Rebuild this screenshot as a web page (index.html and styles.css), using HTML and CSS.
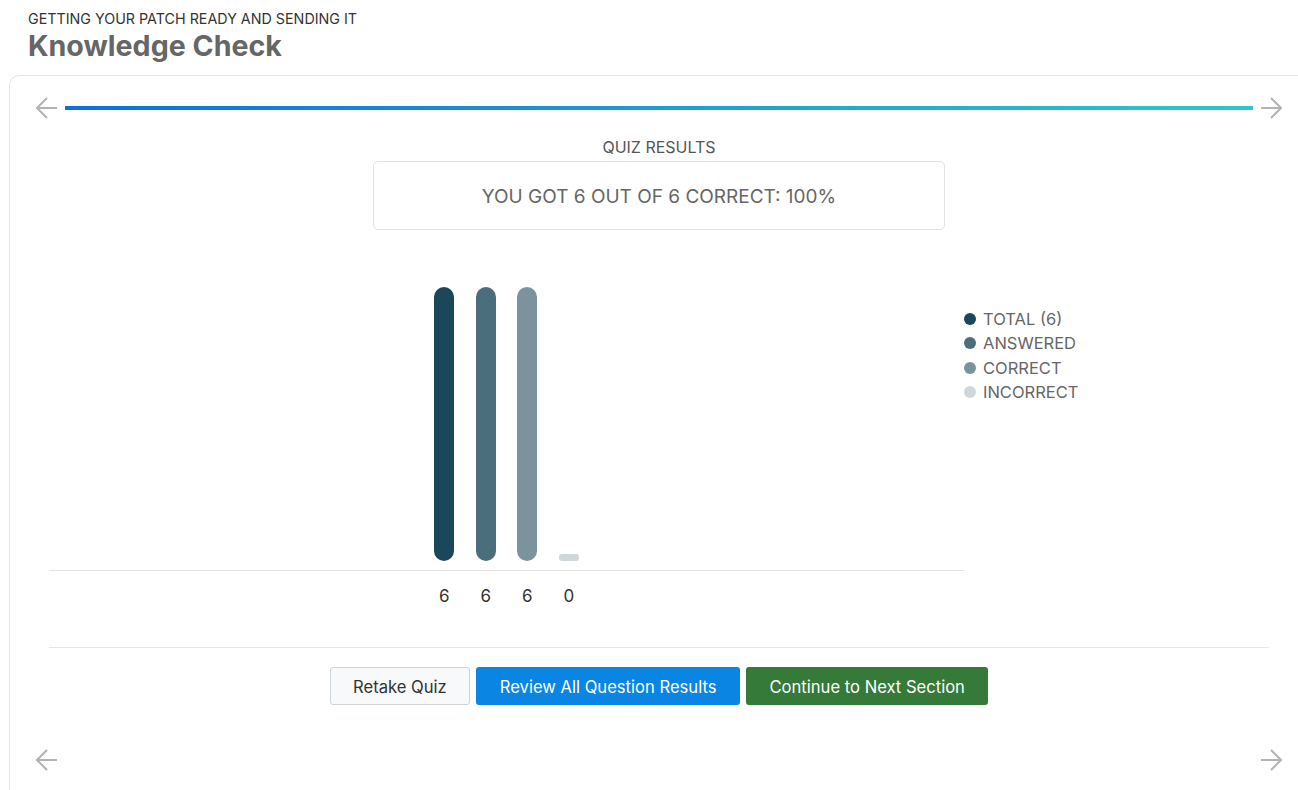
FILE: index.html
```html
<!DOCTYPE html>
<html>
<head>
<meta charset="utf-8">
<link rel="stylesheet" href="styles.css">
</head>
<body>
<header class="page-header">
  <div class="subtitle">GETTING YOUR PATCH READY AND SENDING IT</div>
  <h1 class="title">Knowledge Check</h1>
</header>
<main class="card">
  <div class="nav-row">
    <svg class="arrow" width="22" height="22" viewBox="0 0 22 22"><path d="M21 11H1M11 1L1 11L11 21" fill="none" stroke="#b3b3b3" stroke-width="2"/></svg>
    <div class="progress"></div>
    <svg class="arrow" width="22" height="22" viewBox="0 0 22 22"><path d="M1 11H21M11 1L21 11L11 21" fill="none" stroke="#b3b3b3" stroke-width="2"/></svg>
  </div>
  <section class="content">
    <div class="results-label">QUIZ RESULTS</div>
    <div class="score-box">YOU GOT 6 OUT OF 6 CORRECT: 100%</div>
    <div class="chart">
      <div class="plot-col">
        <div class="plot">
          <div class="bar c1" style="height:274px"></div>
          <div class="bar c2" style="height:274px"></div>
          <div class="bar c3" style="height:274px"></div>
          <div class="bar c4" style="height:7px"></div>
        </div>
        <div class="values">
          <span>6</span><span>6</span><span>6</span><span>0</span>
        </div>
      </div>
      <ul class="legend">
        <li><span class="dot c1"></span>TOTAL (6)</li>
        <li><span class="dot c2"></span>ANSWERED</li>
        <li><span class="dot c3"></span>CORRECT</li>
        <li><span class="dot c4"></span>INCORRECT</li>
      </ul>
    </div>
    <div class="actions">
      <button class="btn btn-light">Retake Quiz</button>
      <button class="btn btn-blue">Review All Question Results</button>
      <button class="btn btn-green">Continue to Next Section</button>
    </div>
  </section>
  <div class="nav-row bottom">
    <svg class="arrow" width="22" height="22" viewBox="0 0 22 22"><path d="M21 11H1M11 1L1 11L11 21" fill="none" stroke="#b3b3b3" stroke-width="2"/></svg>
    <div class="spacer"></div>
    <svg class="arrow" width="22" height="22" viewBox="0 0 22 22"><path d="M1 11H21M11 1L21 11L11 21" fill="none" stroke="#b3b3b3" stroke-width="2"/></svg>
  </div>
</main>
</body>
</html>
```

FILE: styles.css
```css
* { box-sizing: border-box; }
html, body { margin: 0; padding: 0; }
body {
  font-family: Inter, "Noto Sans", sans-serif;
  background: #fff;
  color: #333;
  width: 1298px;
  height: 790px;
  overflow: hidden;
}
.page-header {
  padding: 10px 28px 0;
}
.subtitle {
  font-size: 14.3px;
  line-height: 18px;
  color: #333;
}
.title {
  margin: 2px 0 0;
  font-size: 28.6px;
  line-height: 32px;
  font-weight: 700;
  color: #666;
}
.card {
  margin: 13px 0 0 9px;
  width: 1300px;
  height: 740px;
  border: 1px solid #e6e6e6;
  border-bottom: none;
  border-radius: 10px 10px 0 0;
  padding: 21px 26px 0;
}
.nav-row {
  display: flex;
  align-items: center;
  gap: 7px;
  height: 22px;
}
.arrow { flex: none; display: block; }
.progress {
  flex: 1;
  height: 4px;
  background: linear-gradient(90deg, #0a72da, #2bc8c8);
}
.spacer { flex: 1; }
.content {
  padding: 0 13px;
}
.results-label {
  margin-top: 18px;
  text-align: center;
  font-size: 16px;
  line-height: 20px;
  color: #555;
}
.score-box {
  width: 572px;
  height: 69px;
  margin: 4px auto 0;
  border: 1px solid #e3e3e3;
  border-radius: 5px;
  display: flex;
  align-items: center;
  justify-content: center;
  padding-top: 2px;
  font-size: 19px;
  color: #666;
}
.chart {
  display: flex;
  margin-top: 57px;
}
.plot-col { width: 915px; flex: none; }
.plot {
  height: 284px;
  display: flex;
  justify-content: center;
  align-items: flex-end;
  gap: 21.5px;
  padding-bottom: 9px;
  border-bottom: 1px solid #e3e3e3;
}
.bar {
  width: 20px;
  border-radius: 10px;
}
.bar.c4 { border-radius: 3px; }
.c1 { background: #1a4759; }
.c2 { background: #4a6e7b; }
.c3 { background: #7a939c; }
.c4 { background: #cfd7da; }
.values {
  display: flex;
  justify-content: center;
  gap: 21.5px;
  margin-top: 13px;
}
.values span {
  width: 20px;
  text-align: center;
  font-size: 17px;
  line-height: 24px;
  color: #333;
}
.legend {
  list-style: none;
  margin: 20px 0 0;
  padding: 0;
}
.legend li {
  display: flex;
  align-items: center;
  height: 24.3px;
  font-size: 16.5px;
  color: #666;
}
.dot {
  width: 12px;
  height: 12px;
  border-radius: 50%;
  margin-right: 7px;
}
.actions {
  margin-top: 39px;
  border-top: 1px solid #e6e6e6;
  padding-top: 19px;
  display: flex;
  justify-content: center;
  gap: 6px;
}
.btn {
  font-family: Inter, "Noto Sans", sans-serif;
  font-size: 16.6px;
  height: 38px;
  border-radius: 3px;
  border: 1px solid transparent;
  padding: 1px 22.5px 0;
  cursor: pointer;
}
.btn-light {
  background: #f8f9fa;
  border-color: #ced4da;
  color: #333;
}
.btn-blue {
  background: #0b85e3;
  color: #fff;
}
.btn-green {
  background: #357a38;
  color: #fff;
}
.nav-row.bottom {
  margin-top: 44px;
}
```
